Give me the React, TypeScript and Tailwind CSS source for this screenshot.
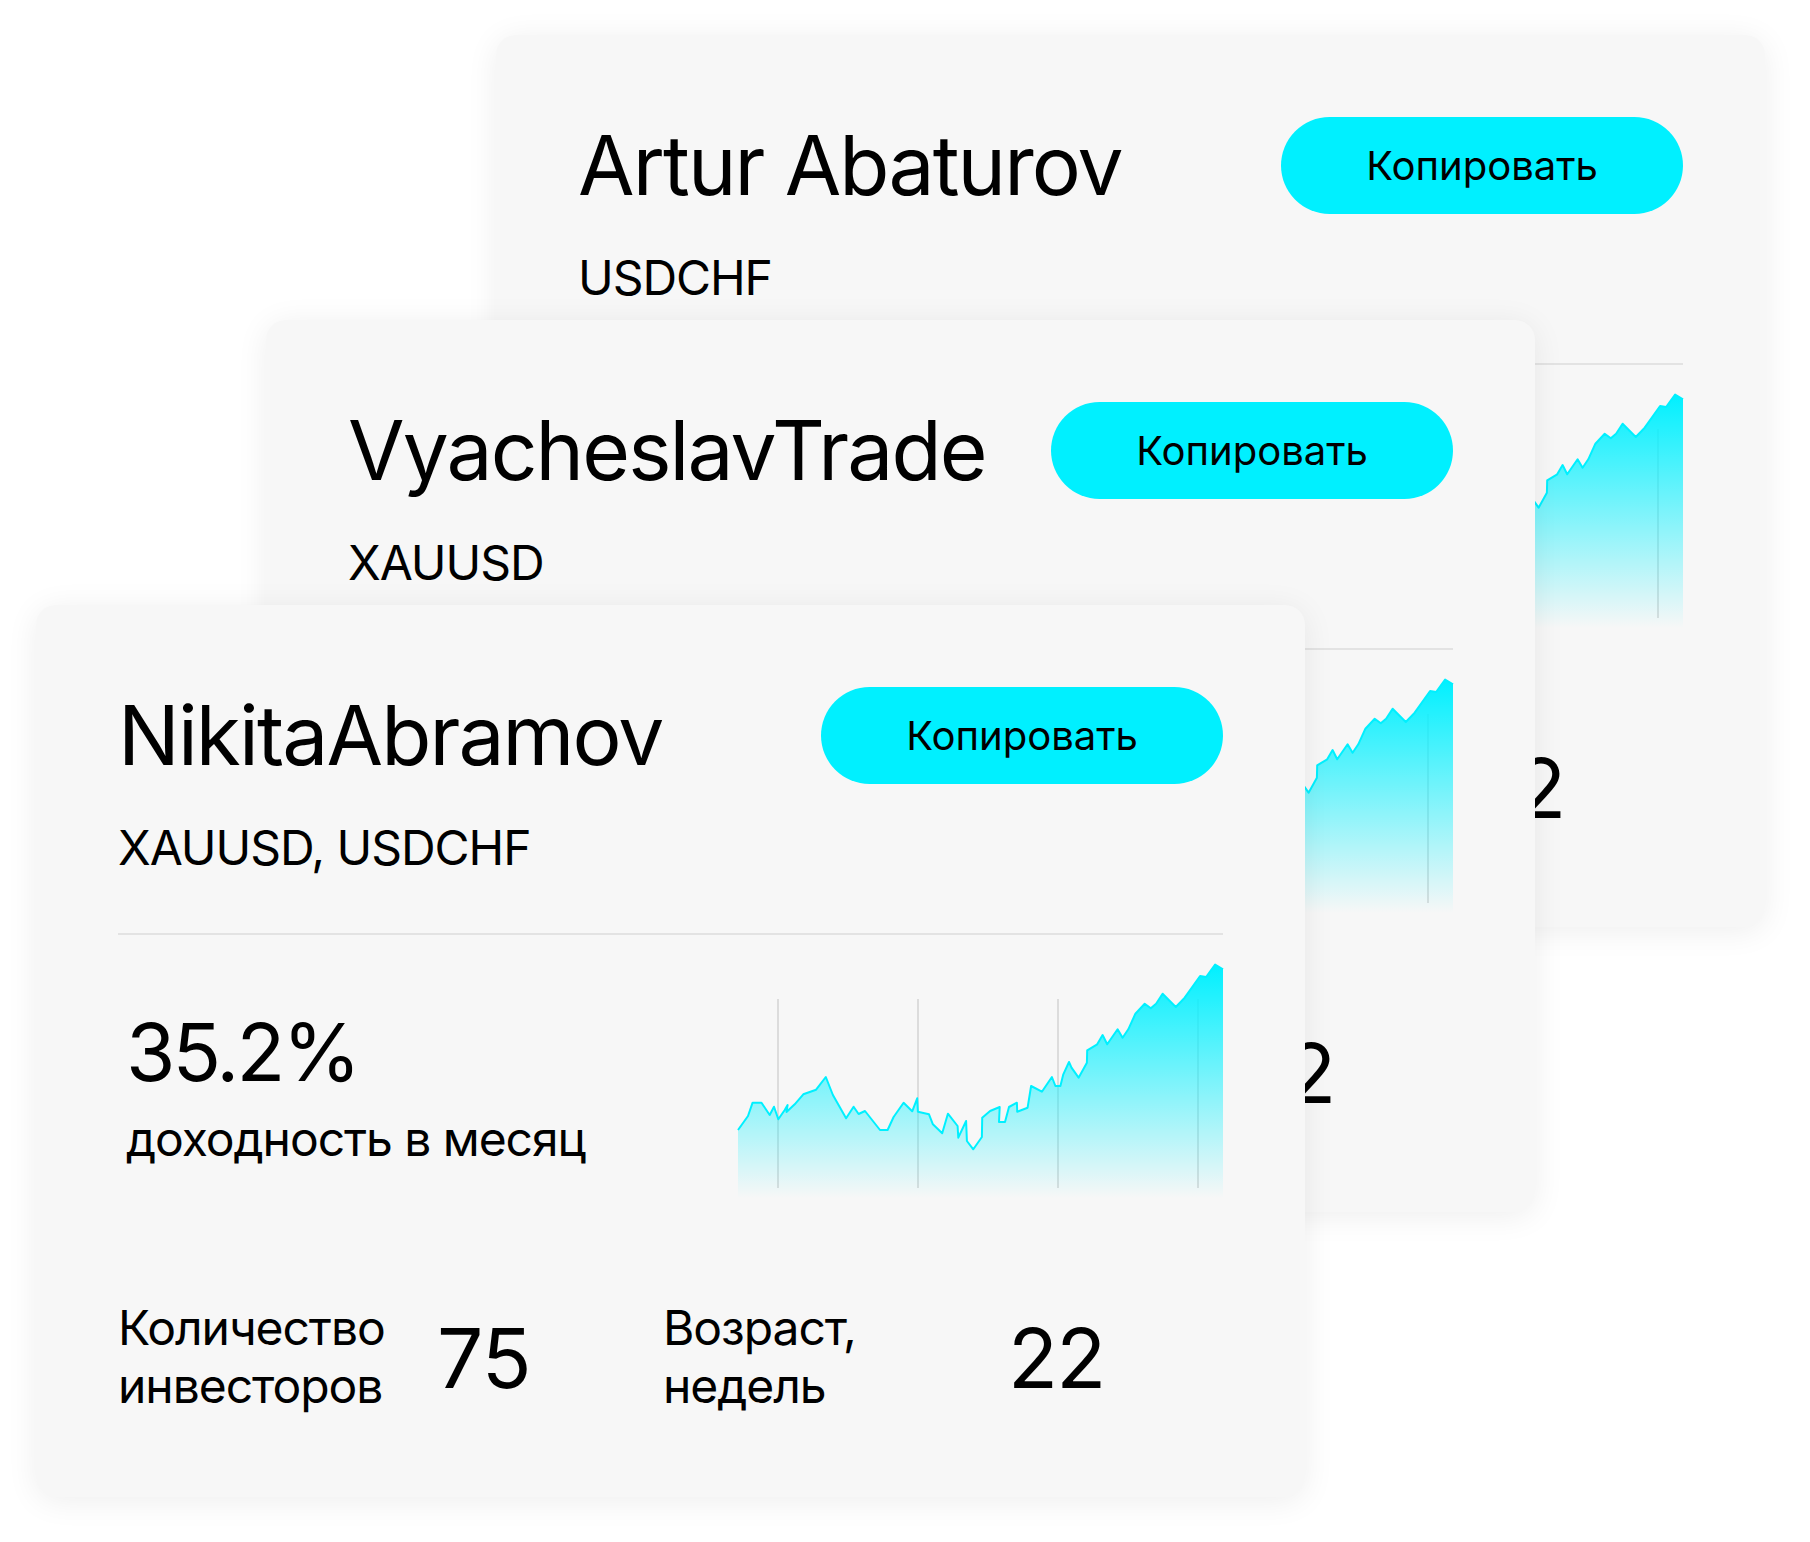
const points: [number, number][] = [
  [0, 166], [10, 152], [14.6, 138.7], [23.5, 138.7], [31.7, 151], [36, 142.7],
  [40.3, 155.3], [46.7, 146], [49.6, 141], [48.5, 148], [56.7, 140.3], [65.3, 130.3],
  [78.1, 125.7], [87.8, 113], [94.9, 131], [108.1, 154.3], [115.6, 142.7], [120.6, 150],
  [127, 147], [142, 166], [149.6, 166], [155.6, 153], [165.6, 138.7], [174.2, 147.3],
  [179.2, 134.3], [179.9, 147.7], [191, 150.3], [194.9, 160.3], [204.2, 169.3],
  [209.9, 149.7], [219.6, 162], [220.3, 173.7], [228.1, 157], [228.9, 177], [235.3, 185.3],
  [243.9, 173], [244.2, 153.7], [252.1, 147], [261.7, 143], [261, 158], [267, 158],
  [271, 143], [278.9, 138.7], [279.2, 147.7], [289.6, 143.7], [293.1, 122], [303.9, 127.7],
  [313.9, 113], [317.4, 122], [322.4, 122], [325.3, 110.3], [331, 98], [333.5, 103.7],
  [340.6, 113.7], [348.9, 98.7], [349.2, 86.3], [359.2, 80.3], [364.6, 71], [369.2, 80.3],
  [379.6, 65.3], [384.6, 73.7], [390.3, 65.3], [397.4, 49.7], [406.7, 39.7], [412.8, 44.3],
  [418.1, 39.7], [424.6, 29.7], [437.8, 43], [446.7, 33.7], [462.1, 12], [468.1, 13],
  [477.1, 0.5], [485, 5.3],
];

const gridX = [40, 180, 320, 460];

function Chart({ gid }: { gid: string }) {
  const line = points.map(([x, y], i) => `${i ? "L" : "M"}${x} ${y}`).join(" ");
  const area = `${line} L485 234 L0 234 Z`;

  return (
    <svg width="485" height="234" viewBox="0 0 485 234" className="block shrink-0 overflow-visible">
      <defs>
        <linearGradient id={gid} x1="0" y1="0" x2="0" y2="1">
          <stop offset="0" stopColor="#00f0ff" stopOpacity="1" />
          <stop offset="1" stopColor="#00f0ff" stopOpacity="0" />
        </linearGradient>
      </defs>
      {gridX.map((x) => (
        <line key={x} x1={x} y1="35" x2={x} y2="224" stroke="#dcdcdc" strokeWidth="2" />
      ))}
      <path d={area} fill={`url(#${gid})`} />
      <path d={line} fill="none" stroke="#00f0ff" strokeWidth="2" strokeLinejoin="round" />
    </svg>
  );
}

type CardProps = {
  name: string;
  pairs: string;
  gid: string;
  className: string;
};

function TraderCard({ name, pairs, gid, className }: CardProps) {
  return (
    <div
      className={`absolute w-[1269px] rounded-[20px] bg-[#f7f7f7] px-[82px] pt-[81px] pb-[82px] shadow-[0_4px_32px_rgba(0,0,0,0.07)] ${className}`}
    >
      <div className="flex items-center justify-between">
        <h3 className="text-[82px] leading-[99px] tracking-[-0.023em] text-black">{name}</h3>
        <button className="flex h-[97px] w-[402px] items-center justify-center rounded-full bg-[#00f0ff] text-[40px] leading-none text-black">
          Копировать
        </button>
      </div>

      <div className="mt-[34px] text-[48px] leading-[58px] tracking-[-0.022em] text-black">{pairs}</div>

      <div className="mt-[56px] h-[2px] bg-[#e3e3e3]" />

      <div className="mt-[29px] flex items-start justify-between">
        <div className="mt-[39px] pl-[8px] text-black">
          <div className="text-[80px] leading-[97px] tracking-[-0.035em]">35.2%</div>
          <div className="mt-[10px] text-[48px] leading-[58px] tracking-[-0.022em]">доходность в месяц</div>
        </div>
        <Chart gid={gid} />
      </div>

      <div className="mt-[101px] flex items-center text-black">
        <div className="w-[319px] text-[48px] leading-[58px] tracking-[-0.022em]">
          Количество
          <br />
          инвесторов
        </div>
        <div className="w-[226px] pt-[3px] text-[82px] leading-none tracking-[-0.01em]">75</div>
        <div className="w-[345px] text-[48px] leading-[58px] tracking-[-0.022em]">
          Возраст,
          <br />
          недель
        </div>
        <div className="pt-[3px] text-[82px] leading-none tracking-[-0.02em]">22</div>
      </div>
    </div>
  );
}

export default function App() {
  return (
    <div className="relative h-[1542px] w-[1810px] overflow-hidden bg-white font-['Inter','Noto_Sans',sans-serif]">
      <TraderCard name="Artur Abaturov" pairs="USDCHF" gid="g-back" className="left-[496px] top-[35px]" />
      <TraderCard name="VyacheslavTrade" pairs="XAUUSD" gid="g-mid" className="left-[266px] top-[320px]" />
      <TraderCard name="NikitaAbramov" pairs="XAUUSD, USDCHF" gid="g-front" className="left-[36px] top-[605px]" />
    </div>
  );
}
